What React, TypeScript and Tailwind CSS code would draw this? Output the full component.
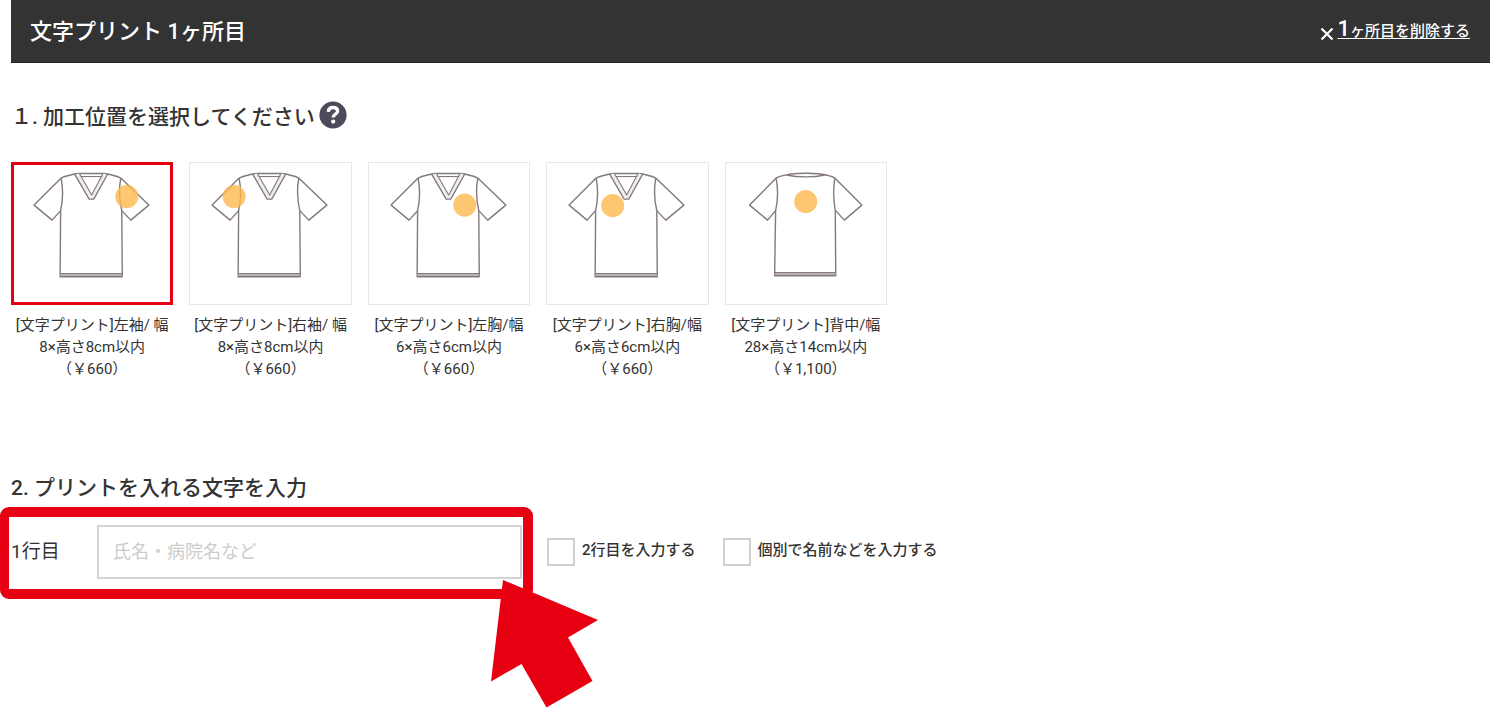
import React, { useState } from "react";

type Position = {
    id: string;
    lines: string[];
    cx: number;
    cy: number;
    back?: boolean;
};

const positions: Position[] = [
    { id: "left-sleeve", lines: ["[文字プリント]左袖/ 幅", "8×高さ8cm以内", "（￥660）"], cx: 115.5, cy: 34.5 },
    { id: "right-sleeve", lines: ["[文字プリント]右袖/ 幅", "8×高さ8cm以内", "（￥660）"], cx: 45, cy: 34.5 },
    { id: "left-chest", lines: ["[文字プリント]左胸/幅", "6×高さ6cm以内", "（￥660）"], cx: 96.5, cy: 43 },
    { id: "right-chest", lines: ["[文字プリント]右胸/幅", "6×高さ6cm以内", "（￥660）"], cx: 66.5, cy: 43.5 },
    { id: "back", lines: ["[文字プリント]背中/幅", "28×高さ14cm以内", "（￥1,100）"], cx: 80.5, cy: 39.5, back: true },
];

const Shirt = ({ cx, cy, back }: { cx: number; cy: number; back?: boolean }) => {
    return (
        <svg viewBox="0 0 162 143" className="block w-full" aria-hidden="true">
            {back ? (
                <g fill="none" stroke="#84797a" strokeWidth="1.4" strokeLinejoin="round">
                    <path d="M51 16 L24.5 43 L42.5 58 L50.5 48.5" />
                    <path d="M109.5 16 L136.5 43 L119 58 L110.5 48.5" />
                    <path d="M51 16 C53 27 53 38 50.5 48.5 L49.5 113.5 L110.5 113.5 L110 48.5 C108 38 108 27 109.5 16" />
                    <path d="M49.5 110.5 H110.5" />
                    <path d="M49.5 112 H110.5" stroke="#b5adae" />
                    <path d="M51 16 C55.5 13.5 60.5 13 65.5 12 C74.5 11 86.5 11 95.5 12 C100.5 13 105.5 13.5 109.5 16" />
                    <path d="M61.5 13 C72.5 15.5 88.5 15.5 99.5 13" />
                </g>
            ) : (
                <g fill="none" stroke="#84797a" strokeWidth="1.4" strokeLinejoin="round">
                    <path d="M50 16 L23 43 L41 58 L49.5 48.5" />
                    <path d="M109.5 16 L137.5 43 L119.5 58 L110.5 48.5" />
                    <path d="M50 16 C52 27 52 38 49.5 48.5 L49 114.5 L111 114.5 L110.5 48.5 C108 38 107.5 27 109.5 16" />
                    <path d="M49 111.5 H111" />
                    <path d="M49 113 H111" stroke="#b5adae" />
                    <path d="M50 16 C55 13.5 59 13.5 63.5 12 L67 11.5 H93 L96.5 12 C101 13.5 105 13.5 109.5 16" />
                    <path d="M66 12 L80.5 35.5 L94 12" stroke="#eeecec" strokeWidth="3" />
                    <path d="M63.5 12 L78 37 H82.5 L96.5 12" />
                    <path d="M68.5 12 L80.5 33 L91.5 12" strokeWidth="1.1" />
                    <path d="M69.5 14.5 H91" strokeWidth="1.1" />
                </g>
            )}
            <circle cx={cx} cy={cy} r="11.5" fill="#fdb94e" fillOpacity="0.8" />
        </svg>
    );
};

const App = () => {
    const [selected, setSelected] = useState("left-sleeve");

    return (
        <main className="bg-white pb-[109px] text-[#333] font-['Roboto','Noto_Sans_CJK_JP',sans-serif]">
            <header className="ml-[11px] mr-[10px] flex h-[63px] items-center justify-between border-b border-[#222] bg-[#333] pl-[19px] pr-5 text-white">
                <h1 className="text-[22px] font-medium">文字プリント 1ヶ所目</h1>
                <button type="button" className="flex items-center gap-[3px] pb-[2px] font-medium">
                    <svg viewBox="0 0 14 14" className="mt-2 size-[14px]" aria-hidden="true">
                        <path d="M1.5 1.5 L12.5 12.5 M12.5 1.5 L1.5 12.5" stroke="currentColor" strokeWidth="2.2" />
                    </svg>
                    <span className="text-[15px] leading-5 underline underline-offset-2">
                        <span className="text-[22px]">1</span>ヶ所目を削除する
                    </span>
                </button>
            </header>

            <section className="pl-[11px] pt-[38px]">
                <div className="flex items-center gap-1">
                    <h2 className="text-[21px] font-medium leading-8">１. 加工位置を選択してください</h2>
                    <button type="button" aria-label="ヘルプ" className="pb-1">
                        <svg viewBox="0 0 28 28" className="block size-7" aria-hidden="true">
                            <circle cx="14" cy="14" r="13.6" fill="#4d4a5c" />
                            <path
                                d="M9.3 10.8 C9.5 7.8 11.6 6.5 14.2 6.5 C17 6.5 18.6 8.1 18.6 10.3 C18.6 13.2 14.2 13.3 14.2 16.5"
                                fill="none"
                                stroke="#fff"
                                strokeWidth="3.4"
                            />
                            <circle cx="14.2" cy="20.6" r="2.1" fill="#fff" />
                        </svg>
                    </button>
                </div>

                <div
                    className="mt-[29px] grid max-w-[876px] grid-cols-5 gap-4"
                    role="radiogroup"
                    aria-label="加工位置"
                >
                    {positions.map((p) => (
                        <label key={p.id} className="cursor-pointer">
                            <input
                                type="radio"
                                name="position"
                                value={p.id}
                                checked={selected === p.id}
                                onChange={() => setSelected(p.id)}
                                className="peer sr-only"
                            />
                            <span className="block outline outline-1 -outline-offset-1 outline-[#e8e8e8] peer-checked:outline-[3px] peer-checked:-outline-offset-[3px] peer-checked:outline-[#e60012]">
                                <Shirt cx={p.cx} cy={p.cy} back={p.back} />
                            </span>
                            <span className="mt-[9px] block whitespace-nowrap text-center text-[15px] leading-[22px]">
                                {p.lines.map((line) => (
                                    <span key={line} className="block">
                                        {line}
                                    </span>
                                ))}
                            </span>
                        </label>
                    ))}
                </div>
            </section>

            <section className="pt-[92px]">
                <h2 className="pl-[11px] text-[21px] font-medium leading-8">2. プリントを入れる文字を入力</h2>
                <div className="mt-[3px] flex flex-wrap items-center">
                    <div className="relative flex h-[92px] w-[533px] items-center rounded-[9px] border-[10px] border-l-[9px] border-[#e60012] pb-[3px] pl-[2px] pr-px">
                        <label htmlFor="line1" className="w-[86px] text-[19px]">
                            1行目
                        </label>
                        <input
                            id="line1"
                            type="text"
                            placeholder="氏名・病院名など"
                            className="h-[54px] min-w-0 flex-1 border-2 border-[#d3d3d3] px-[14px] text-[18px] outline-none placeholder:text-[#ccc]"
                        />
                        <svg
                            viewBox="0 0 107 128"
                            className="pointer-events-none absolute -right-[75px] top-[63px] w-[107px]"
                            aria-hidden="true"
                        >
                            <path d="M12 0 L107 40 L77 57.5 L101.5 101 L55.5 127.5 L30.5 84 L0 101.5 Z" fill="#e60012" />
                        </svg>
                    </div>
                    <label className="ml-[14px] flex items-center gap-[7px] pb-[2px] text-[15px] font-medium">
                        <input
                            type="checkbox"
                            className="size-7 appearance-none border-2 border-[#d0d0d0] bg-white checked:bg-[#333]"
                        />
                        <span className="pb-1">2行目を入力する</span>
                    </label>
                    <label className="ml-[27px] flex items-center gap-[7px] pb-[2px] text-[15px] font-medium">
                        <input
                            type="checkbox"
                            className="size-7 appearance-none border-2 border-[#d0d0d0] bg-white checked:bg-[#333]"
                        />
                        <span className="pb-1">個別で名前などを入力する</span>
                    </label>
                </div>
            </section>
        </main>
    );
};

export default App;
